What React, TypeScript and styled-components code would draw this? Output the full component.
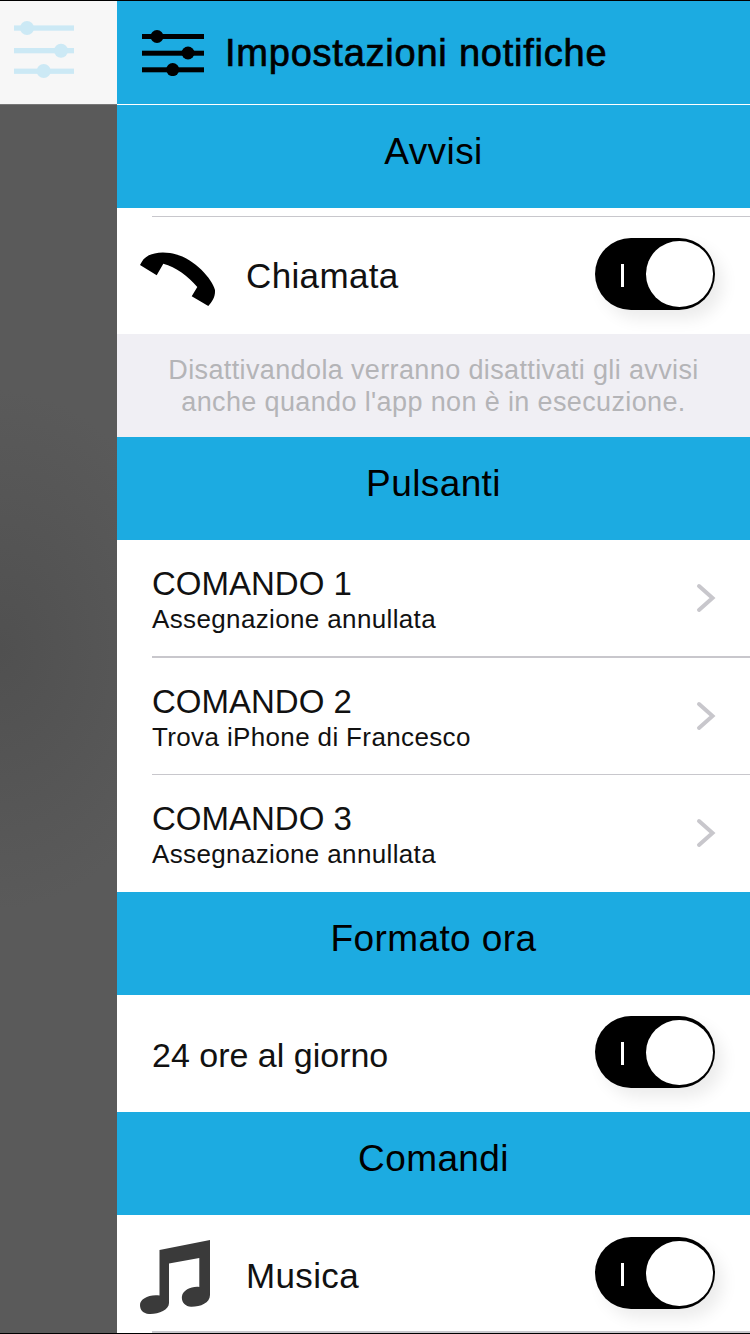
import React from "react";
import styled, { createGlobalStyle } from "styled-components";

const Global = createGlobalStyle`
  html, body { margin: 0; padding: 0; background: #fff; }
  body { font-family: "Liberation Sans", Arial, sans-serif; color: #000; }
`;

const Screen = styled.div`
  width: 750px;
  height: 1334px;
  display: flex;
  overflow: hidden;
  border-top: 1px solid #000;
  border-bottom: 1px solid #000;
  box-sizing: border-box;
`;

const Sidebar = styled.aside`
  width: 117px;
  flex: none;
  display: flex;
  flex-direction: column;
`;

const SideTab = styled.div`
  height: 86px;
  flex: none;
  background: #f7f7f7;
  border-bottom: 1px solid #777;
  padding: 17px 0 0 14px;
`;

const SideFill = styled.div`
  flex: 1;
  background: radial-gradient(ellipse 190px 260px at 0px 545px, #505050 0%, #5a5a5a 100%);
`;

const Main = styled.main`
  width: 633px;
  flex: none;
  display: flex;
  flex-direction: column;
`;

const Header = styled.header`
  height: 103px;
  flex: none;
  background: #1cabe1;
  border-bottom: 1px solid #fff;
  display: flex;
  align-items: center;
  gap: 21px;
  padding-left: 25px;
`;

const Title = styled.h1`
  margin: 0;
  font-size: 38px;
  font-weight: 400;
  -webkit-text-stroke: 0.7px #000;
  line-height: 1;
  letter-spacing: 0.77px;
`;

const SectionBar = styled.div`
  height: 103px;
  flex: none;
  box-sizing: border-box;
  padding-bottom: 9px;
  background: #1cabe1;
  display: flex;
  align-items: center;
  justify-content: center;
  font-size: 37px;
  letter-spacing: 0.4px;
`;

const ToggleRow = styled.div<{ $height: number; $raised?: boolean }>`
  height: ${(p) => p.$height}px;
  flex: none;
  box-sizing: border-box;
  background: #fff;
  display: flex;
  align-items: center;
  padding: ${(p) => (p.$raised ? "7px" : "0")} 35px 0 35px;
  position: relative;
`;

const TopRule = styled.div`
  position: absolute;
  left: 35px;
  right: 0;
  top: 8px;
  height: 1px;
  background: #c8c7cc;
`;

const BottomRule = styled.div`
  position: absolute;
  left: 35px;
  right: 0;
  bottom: 0;
  height: 2px;
  background: #c8c7cc;
`;

const IconSlot = styled.div<{ $nudge: number }>`
  width: 106px;
  margin-left: -12px;
  margin-top: ${(p) => p.$nudge}px;
  flex: none;
  display: flex;
  align-items: center;
`;

const RowLabel = styled.span<{ $tight?: boolean }>`
  flex: 1;
  font-size: ${(p) => (p.$tight ? 34 : 35)}px;
  padding-top: 3px;
  color: #111;
  white-space: nowrap;
  letter-spacing: ${(p) => (p.$tight ? 0 : 0.35)}px;
`;

const ToggleTrack = styled.div<{ $lift: number }>`
  width: 120px;
  height: 72px;
  flex: none;
  margin-bottom: ${(p) => p.$lift}px;
  border-radius: 36px;
  background: #000;
  position: relative;
  box-shadow: 8px 9px 16px rgba(0, 0, 0, 0.08);
`;

const ToggleMark = styled.span`
  position: absolute;
  left: 26px;
  top: 26px;
  width: 3px;
  height: 23px;
  background: #fff;
`;

const ToggleKnob = styled.span`
  position: absolute;
  right: 2.5px;
  top: 3.5px;
  width: 67px;
  height: 65.5px;
  border-radius: 50%;
  background: #fff;
`;

const Note = styled.p`
  margin: 0;
  height: 103px;
  flex: none;
  box-sizing: border-box;
  padding-top: 20px;
  background: #f0eff4;
  color: #b4b4b7;
  font-size: 27px;
  line-height: 32px;
  text-align: center;
  letter-spacing: 0.37px;
`;

const CommandRow = styled.div<{ $height: number }>`
  height: ${(p) => p.$height}px;
  flex: none;
  box-sizing: border-box;
  background: #fff;
  padding: 26px 0 0 35px;
  display: flex;
  flex-direction: column;
  position: relative;
`;

const CommandSep = styled.div<{ $thick?: boolean }>`
  position: absolute;
  left: 35px;
  right: 0;
  bottom: 0;
  height: ${(p) => (p.$thick ? 2 : 1)}px;
  background: #c8c7cc;
`;

const CommandName = styled.span`
  font-size: 33px;
  line-height: 36px;
  color: #111;
`;

const CommandValue = styled.span`
  font-size: 26px;
  line-height: 34px;
  color: #111;
  letter-spacing: 0.36px;
`;

const Chevron = styled.svg`
  position: absolute;
  right: 34px;
  top: calc(50% - 17px);
`;

const HeaderSliders = () => (
  <svg width={62} height={46} viewBox="0 0 62 46" fill="#000" aria-hidden>
    <rect x="0" y="4" width="62" height="5" />
    <rect x="0" y="20.7" width="62" height="5" />
    <rect x="0" y="37.3" width="62" height="5" />
    <circle cx="15" cy="6.5" r="6.5" />
    <circle cx="46" cy="23" r="6.5" />
    <circle cx="30.7" cy="39.6" r="6.5" />
  </svg>
);

const SideSliders = () => (
  <svg width={60} height={60} viewBox="0 0 60 60" fill="#cce9f5" aria-hidden>
    <rect x="0" y="7.4" width="60" height="5.3" />
    <rect x="0" y="30" width="60" height="5.3" />
    <rect x="0" y="50.6" width="60" height="5.3" />
    <circle cx="13" cy="10" r="7" />
    <circle cx="47" cy="32.7" r="7" />
    <circle cx="29.7" cy="53" r="7" />
  </svg>
);

const Phone = () => (
  <svg width="76" height="55" viewBox="0 0 76 55" aria-hidden>
    <path
      d="M0 13 L16.7 23.3 L23.3 11.7 C36 15 48 24 57.3 35 L51.7 44.3 L68.3 54 C72 50 75.5 45 75 38 C72 26 52 4 30 1 C18 -1 6 2 1.7 10 Z"
      fill="#000"
    />
  </svg>
);

const MusicNote = () => (
  <svg width="71" height="75" viewBox="0 0 71 75" aria-hidden>
    <path
      d="M19.5 10 L70 0 L70 55 C70 63 60 67 51 66.8 C45 66.5 41 62 42 56 C43 50 52 46 59.3 47 L59.3 18 L29 23.6 L29 63 C29 70 18 74.5 9 74 C3 73.5 0 70 0 65 C0 59 9 54 19.5 55.5 Z"
      fill="#3a3a3a"
    />
  </svg>
);

const ChevronIcon = () => (
  <Chevron width="20" height="32" viewBox="0 0 20 32" aria-hidden>
    <path d="M3 4 L16.5 16 L3 28" fill="none" stroke="#c8c7cc" strokeWidth="4" strokeLinecap="round" />
  </Chevron>
);

const Toggle = ({ lift = 0 }: { lift?: number }) => (
  <ToggleTrack $lift={lift}>
    <ToggleMark />
    <ToggleKnob />
  </ToggleTrack>
);

const commands = [
  { name: "COMANDO 1", value: "Assegnazione annullata", height: 118 },
  { name: "COMANDO 2", value: "Trova iPhone di Francesco", height: 117 },
  { name: "COMANDO 3", value: "Assegnazione annullata", height: 117 },
];

export default function App() {
  return (
    <Screen>
      <Global />
      <Sidebar>
        <SideTab>
          <SideSliders />
        </SideTab>
        <SideFill />
      </Sidebar>
      <Main>
        <Header>
          <HeaderSliders />
          <Title>Impostazioni notifiche</Title>
        </Header>
        <SectionBar>Avvisi</SectionBar>
        <ToggleRow $height={126} $raised>
          <TopRule />
          <IconSlot $nudge={10}>
            <Phone />
          </IconSlot>
          <RowLabel>Chiamata</RowLabel>
          <Toggle lift={2} />
        </ToggleRow>
        <Note>
          Disattivandola verranno disattivati gli avvisi
          <br />
          anche quando l'app non è in esecuzione.
        </Note>
        <SectionBar>Pulsanti</SectionBar>
        {commands.map((c, i) => (
          <CommandRow key={c.name} $height={c.height}>
            <CommandName>{c.name}</CommandName>
            <CommandValue>{c.value}</CommandValue>
            <ChevronIcon />
            {i < 2 && <CommandSep $thick={i === 0} />}
          </CommandRow>
        ))}
        <SectionBar>Formato ora</SectionBar>
        <ToggleRow $height={117}>
          <RowLabel $tight>24 ore al giorno</RowLabel>
          <Toggle lift={3} />
        </ToggleRow>
        <SectionBar>Comandi</SectionBar>
        <ToggleRow $height={118}>
          <IconSlot $nudge={7}>
            <MusicNote />
          </IconSlot>
          <RowLabel>Musica</RowLabel>
          <Toggle lift={2} />
          <BottomRule />
        </ToggleRow>
      </Main>
    </Screen>
  );
}
